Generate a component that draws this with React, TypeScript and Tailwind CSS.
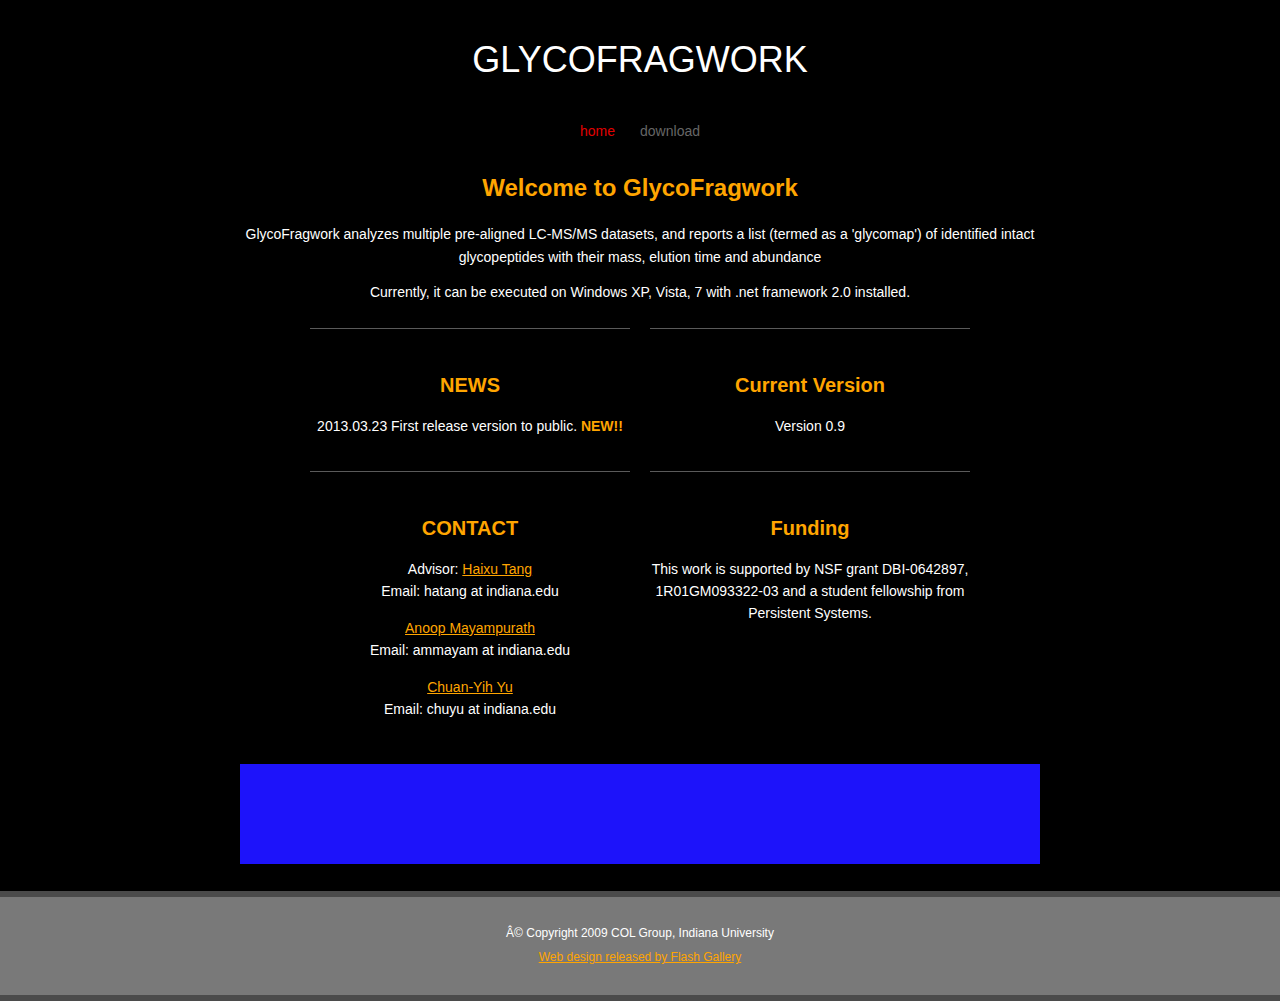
import React from 'react';

const orange = 'text-[#ffa500]';

function Section({ title, children }: { title: string; children: React.ReactNode }) {
  return (
    <div className="border-t border-[#5a5a5a] pt-[43px] text-center">
      <h3 className={`text-[20px] leading-[26px] font-bold ${orange}`}>{title}</h3>
      <div className="mt-[17px] text-[14px] leading-[22px] text-white">{children}</div>
    </div>
  );
}

function Link({ children, className = 'text-[#ffa500]' }: { children: React.ReactNode; className?: string }) {
  return (
    <a href="#" className={`underline ${className}`}>
      {children}
    </a>
  );
}

export default function App() {
  return (
    <div className="min-h-screen bg-black font-['Liberation_Sans',Arial,sans-serif] text-white">
      <div className="mx-auto w-[800px]">
        <header className="pt-[42px] text-center">
          <h1 className="text-[36px] leading-[36px] font-normal text-white">GLYCOFRAGWORK</h1>
          <nav className="mt-[43px] flex justify-center gap-[25px] text-[14px] leading-[20px]">
            <a href="#" className="text-[#e00000]">home</a>
            <a href="#" className="text-[#666666]">download</a>
          </nav>
        </header>

        <main className="text-center">
          <h2 className={`mt-[32px] text-[24px] leading-[30px] font-bold ${orange}`}>Welcome to GlycoFragwork</h2>
          <p className="mt-[20px] text-[14px] leading-[23px]">
            GlycoFragwork analyzes multiple pre-aligned LC-MS/MS datasets, and reports a list (termed as a 'glycomap') of identified intact glycopeptides with their mass, elution time and abundance
          </p>
          <p className="mt-[12px] text-[14px] leading-[23px]">
            Currently, it can be executed on Windows XP, Vista, 7 with .net framework 2.0 installed.
          </p>

          <div className="mx-auto mt-[24px] grid w-[660px] grid-cols-2 gap-x-[20px]">
            <div className="pb-[34px]">
              <Section title="NEWS">
                <p>
                  2013.03.23 First release version to public. <span className={`font-bold ${orange}`}>NEW!!</span>
                </p>
              </Section>
            </div>
            <div className="pb-[34px]">
              <Section title="Current Version">
                <p>Version 0.9</p>
              </Section>
            </div>
            <div>
              <Section title="CONTACT">
                <p>
                  Advisor: <Link>Haixu Tang</Link>
                  <br />
                  Email: hatang at indiana.edu
                </p>
                <p className="mt-[15px]">
                  <Link>Anoop Mayampurath</Link>
                  <br />
                  Email: ammayam at indiana.edu
                </p>
                <p className="mt-[15px]">
                  <Link>Chuan-Yih Yu</Link>
                  <br />
                  Email: chuyu at indiana.edu
                </p>
              </Section>
            </div>
            <div>
              <Section title="Funding">
                <p>
                  This work is supported by NSF grant DBI-0642897, 1R01GM093322-03 and a student fellowship from Persistent Systems.
                </p>
              </Section>
            </div>
          </div>

          <div className="mt-[44px] h-[100px] w-full bg-[#1d13fa]" />
        </main>
      </div>

      <footer className="mt-[27px] border-y-[6px] border-[#4b4b4b] bg-[#797979] pb-[26px] pt-[24px] text-center text-[12px] leading-[24px]">
        <p className="text-white">Â© Copyright 2009 COL Group, Indiana University</p>
        <p>
          <Link>Web design released by Flash Gallery</Link>
        </p>
      </footer>
    </div>
  );
}
